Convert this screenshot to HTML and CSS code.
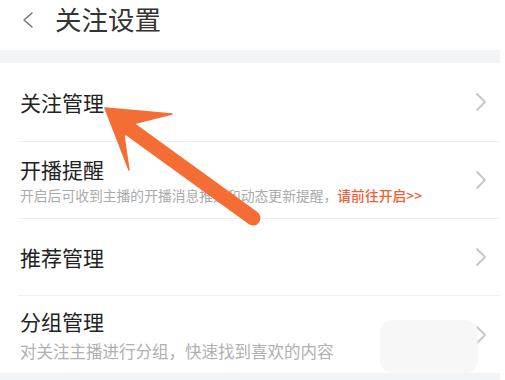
FILE: index.html
```html
<!DOCTYPE html>
<html lang="zh">
<head>
<meta charset="utf-8">
<link rel="stylesheet" href="styles.css">
</head>
<body>
<div class="page">
  <header class="header">
    <svg class="back" width="14" height="18" viewBox="0 0 14 18"><polyline points="11,2 3,9 11,16" fill="none" stroke="#777" stroke-width="1.6" stroke-linecap="round" stroke-linejoin="round"/></svg>
    <h1 class="title">关注设置</h1>
  </header>
  <div class="band"></div>
  <ul class="list">
    <li class="row r1">
      <div class="text"><div class="name">关注管理</div></div>
      <svg class="chev" width="12" height="20" viewBox="0 0 12 20"><polyline points="2,2 10,10 2,18" fill="none" stroke="#c6c6c6" stroke-width="1.8" stroke-linecap="round" stroke-linejoin="round"/></svg>
    </li>
    <li class="row r2">
      <div class="text"><div class="name">开播提醒</div><div class="sub">开启后可收到主播的开播消息推送和动态更新提醒，<span class="link">请前往开启&gt;&gt;</span></div></div>
      <svg class="chev" width="12" height="20" viewBox="0 0 12 20"><polyline points="2,2 10,10 2,18" fill="none" stroke="#c6c6c6" stroke-width="1.8" stroke-linecap="round" stroke-linejoin="round"/></svg>
    </li>
    <li class="row r3">
      <div class="text"><div class="name">推荐管理</div></div>
      <svg class="chev" width="12" height="20" viewBox="0 0 12 20"><polyline points="2,2 10,10 2,18" fill="none" stroke="#c6c6c6" stroke-width="1.8" stroke-linecap="round" stroke-linejoin="round"/></svg>
    </li>
    <li class="row r4">
      <div class="text"><div class="name">分组管理</div><div class="sub big">对关注主播进行分组，快速找到喜欢的内容</div></div>
      <svg class="chev" width="12" height="20" viewBox="0 0 12 20"><polyline points="2,2 10,10 2,18" fill="none" stroke="#c6c6c6" stroke-width="1.8" stroke-linecap="round" stroke-linejoin="round"/></svg>
    </li>
  </ul>
  <div class="band bottom"></div>
  <div class="watermark"></div>
  <svg class="arrow" width="505" height="380" viewBox="0 0 505 380">
    <line x1="130" y1="129" x2="253" y2="218" stroke="#f46d35" stroke-width="15" stroke-linecap="round"/>
    <polygon points="105,108 172,114 136,123 124,136 129,170" fill="#f46d35" stroke="#f46d35" stroke-width="1.5" stroke-linejoin="round"/>
  </svg>
</div>
</body>
</html>
```

FILE: styles.css
```css
* { box-sizing: border-box; }
html, body { margin: 0; padding: 0; background: #fff; }
body {
  font-family: "Noto Sans CJK SC", "Noto Sans", sans-serif;
  color: #222;
}
.page {
  position: relative;
  width: 505px;
  height: 380px;
  overflow: hidden;
}
.header {
  height: 50px;
  display: flex;
  align-items: flex-start;
}
.back {
  margin-left: 21px;
  margin-top: 11px;
}
.title {
  margin: 0 0 0 20px;
  font-size: 26.5px;
  line-height: 37px;
  font-weight: 400;
  color: #333;
  white-space: nowrap;
}
.band {
  width: 500px;
  height: 13px;
  background: #f2f5f7;
}
.band.bottom { height: 8px; }
.list {
  list-style: none;
  margin: 0;
  padding: 0;
  width: 500px;
}
.row {
  margin-left: 18px;
  padding: 0 13px 0 2px;
  display: flex;
  align-items: center;
  justify-content: space-between;
  border-bottom: 1px solid #f0f0f0;
}
.r1 { height: 79px; }
.r2 { height: 77px; }
.r3 { height: 77px; }
.r4 { height: 77px; border-bottom: none; }
.name {
  font-size: 21px;
  line-height: 28px;
  color: #222;
}
.sub {
  margin-top: 3px;
  font-size: 13.8px;
  line-height: 19px;
  color: #aaa;
  white-space: nowrap;
}
.sub.big {
  margin-top: 5px;
  font-size: 16.5px;
  line-height: 22px;
  color: #b0b0b0;
}
.link {
  color: #ee6236;
  font-weight: 500;
}
.chev { flex: none; }
.watermark {
  position: absolute;
  left: 380px;
  top: 320px;
  width: 98px;
  height: 53px;
  border-radius: 12px;
  background: #f5f5f5;
  opacity: 0.8;
}
.arrow {
  position: absolute;
  left: 0;
  top: 0;
  pointer-events: none;
}
```
